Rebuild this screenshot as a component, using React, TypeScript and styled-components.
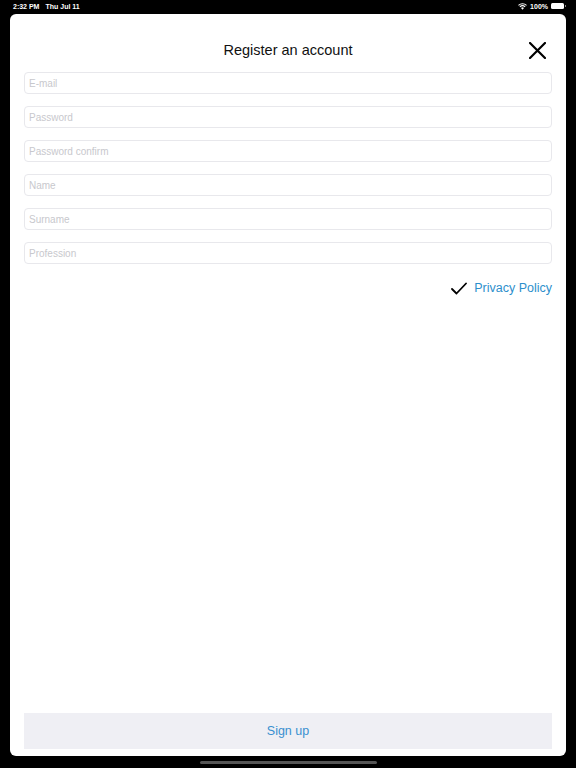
import styled, { createGlobalStyle } from "styled-components";

const GlobalStyle = createGlobalStyle`
  html, body {
    margin: 0;
    padding: 0;
    background: #000;
  }
  body {
    font-family: "Liberation Sans", Arial, sans-serif;
  }
`;

const Screen = styled.div`
  width: 576px;
  height: 768px;
  display: flex;
  flex-direction: column;
  background: #000;
  overflow: hidden;
`;

const StatusBar = styled.div`
  height: 14px;
  display: flex;
  align-items: center;
  justify-content: space-between;
  padding: 0 12px 2px 13px;
  box-sizing: border-box;
  color: #fff;
  font-size: 7px;
  font-weight: bold;
`;

const StatusGroup = styled.div`
  display: flex;
  align-items: center;
  gap: 6px;
`;

const Battery = styled.div`
  width: 13px;
  height: 6px;
  border-radius: 1.5px;
  background: #fff;
  position: relative;

  &::after {
    content: "";
    position: absolute;
    right: -2px;
    top: 2px;
    width: 1px;
    height: 2px;
    background: #888;
  }
`;

const Sheet = styled.main`
  height: 742px;
  margin: 0 10px;
  background: #fff;
  border-radius: 6px;
  display: flex;
  flex-direction: column;
  padding: 14px 14px 7px;
  box-sizing: border-box;
`;

const Header = styled.div`
  height: 44px;
  display: flex;
  align-items: center;
  justify-content: center;
  position: relative;
`;

const Title = styled.h1`
  margin: 0;
  font-size: 14.5px;
  font-weight: normal;
  color: #111;
`;

const CloseButton = styled.button`
  position: absolute;
  right: 6px;
  top: 50%;
  transform: translateY(-50%);
  width: 18px;
  height: 18px;
  padding: 0;
  border: none;
  background: none;
  display: flex;
  align-items: center;
  justify-content: center;
`;

const Fields = styled.div`
  display: flex;
  flex-direction: column;
  gap: 12px;
`;

const Field = styled.input`
  height: 22px;
  box-sizing: border-box;
  border: 1px solid #e8e8ec;
  border-radius: 4px;
  padding: 0 4px;
  font-family: inherit;
  font-size: 10px;
  color: #222;
  background: #fff;
  outline: none;

  &::placeholder {
    color: #c8c8cd;
  }
`;

const PrivacyRow = styled.div`
  margin-top: 14px;
  height: 20px;
  display: flex;
  align-items: center;
  justify-content: flex-end;
  gap: 7px;
`;

const PrivacyLink = styled.a`
  font-size: 12.5px;
  color: #2d8fcc;
  text-decoration: none;
`;

const Spacer = styled.div`
  flex: 1;
`;

const SignUpButton = styled.button`
  height: 36px;
  border: none;
  background: #efeff4;
  color: #3a8fd0;
  font-family: inherit;
  font-size: 12.5px;
  padding: 0;
`;

const HomeArea = styled.div`
  flex: 1;
  display: flex;
  align-items: center;
  justify-content: center;
`;

const HomeIndicator = styled.div`
  width: 177px;
  height: 3px;
  border-radius: 2px;
  background: #555;
`;

const WifiIcon = () => (
  <svg width="9" height="7" viewBox="0 0 18 14">
    <path d="M9 13.5 L6 10.2 A4.3 4.3 0 0 1 12 10.2 Z" fill="#fff" />
    <path d="M3.7 7.7 A7.6 7.6 0 0 1 14.3 7.7" stroke="#fff" strokeWidth="2.2" fill="none" />
    <path d="M1 4.8 A11.5 11.5 0 0 1 17 4.8" stroke="#fff" strokeWidth="2.2" fill="none" />
  </svg>
);

const fields = [
  "E-mail",
  "Password",
  "Password confirm",
  "Name",
  "Surname",
  "Profession",
];

const App = () => {
  return (
    <Screen>
      <GlobalStyle />
      <StatusBar>
        <StatusGroup>
          <span>2:32 PM</span>
          <span>Thu Jul 11</span>
        </StatusGroup>
        <StatusGroup style={{ gap: 3 }}>
          <WifiIcon />
          <span>100%</span>
          <Battery />
        </StatusGroup>
      </StatusBar>
      <Sheet>
        <Header>
          <Title>Register an account</Title>
          <CloseButton aria-label="Close">
            <svg width="17" height="17" viewBox="0 0 17 17">
              <path d="M1 1 L16 16 M16 1 L1 16" stroke="#000" strokeWidth="2.2" strokeLinecap="round" />
            </svg>
          </CloseButton>
        </Header>
        <Fields>
          {fields.map((f) => (
            <Field
              key={f}
              placeholder={f}
              type={f.startsWith("Password") ? "password" : "text"}
            />
          ))}
        </Fields>
        <PrivacyRow>
          <svg width="16" height="13" viewBox="0 0 16 13">
            <path d="M1 7 L5.5 11.5 L15 1.5" stroke="#000" strokeWidth="1.8" fill="none" strokeLinecap="round" strokeLinejoin="round" />
          </svg>
          <PrivacyLink href="#">Privacy Policy</PrivacyLink>
        </PrivacyRow>
        <Spacer />
        <SignUpButton>Sign up</SignUpButton>
      </Sheet>
      <HomeArea>
        <HomeIndicator />
      </HomeArea>
    </Screen>
  );
};

export default App;
